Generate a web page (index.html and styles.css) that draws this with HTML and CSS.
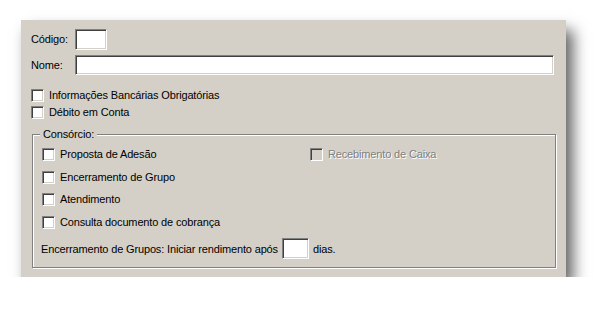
FILE: index.html
```html
<!DOCTYPE html>
<html lang="pt">
<head>
<meta charset="utf-8">
<link rel="stylesheet" href="styles.css">
</head>
<body>
<div class="panel">
  <div class="fields">
    <label class="lbl">Código:</label>
    <div class="inp inp-code"></div>
    <label class="lbl">Nome:</label>
    <div class="inp inp-name"></div>
  </div>
  <div class="checks">
    <div class="chk"><span class="box"></span><span>Informações Bancárias Obrigatórias</span></div>
    <div class="chk"><span class="box"></span><span>Débito em Conta</span></div>
  </div>
  <div class="group">
    <span class="legend">Consórcio:</span>
    <div class="group-grid">
      <div class="col">
        <div class="chk"><span class="box"></span><span>Proposta de Adesão</span></div>
        <div class="chk"><span class="box"></span><span>Encerramento de Grupo</span></div>
        <div class="chk"><span class="box"></span><span>Atendimento</span></div>
        <div class="chk"><span class="box"></span><span>Consulta documento de cobrança</span></div>
      </div>
      <div class="col">
        <div class="chk disabled"><span class="box"></span><span>Recebimento de Caixa</span></div>
      </div>
    </div>
    <div class="days">
      <span>Encerramento de Grupos: Iniciar rendimento após</span>
      <div class="inp inp-days"></div>
      <span>dias.</span>
    </div>
  </div>
</div>
</body>
</html>
```
FILE: styles.css
```css
html, body {
  margin: 0;
  padding: 0;
  background: #ffffff;
}
body {
  font-family: "Liberation Sans", Arial, sans-serif;
  font-size: 11px;
  letter-spacing: -0.15px;
  color: #000;
  padding: 20px 0 0 21px;
}
.panel {
  width: 545px;
  height: 257px;
  box-sizing: border-box;
  background: #d4d0c8;
  padding: 9px 12px 0 10px;
  box-shadow: 7px 10px 14px rgba(0, 0, 0, 0.62);
}
.fields {
  display: grid;
  grid-template-columns: 44px 1fr;
  row-gap: 5px;
  align-items: center;
}
.lbl {
  line-height: 13px;
}
.inp {
  box-sizing: border-box;
  background: #fff;
  border: 1px solid;
  border-color: #808080 #fff #fff #808080;
  box-shadow: inset 1px 1px #404040, inset -1px -1px #d4d0c8;
}
.inp-code {
  width: 32px;
  height: 21px;
}
.inp-name {
  height: 20px;
}
.checks {
  margin-top: 14px;
  display: flex;
  flex-direction: column;
  gap: 4px;
}
.chk {
  display: flex;
  align-items: center;
  gap: 5px;
  height: 13px;
  line-height: 13px;
  white-space: nowrap;
}
.box {
  flex: none;
  box-sizing: border-box;
  width: 13px;
  height: 13px;
  background: #fff;
  border: 1px solid;
  border-color: #808080 #fff #fff #808080;
  box-shadow: inset 1px 1px #404040, inset -1px -1px #d4d0c8;
}
.chk.disabled {
  color: #808080;
  text-shadow: 1px 1px #fff;
}
.chk.disabled .box {
  background: #d4d0c8;
}
.group {
  position: relative;
  margin: 15px -2px 0 1px;
  height: 134px;
  box-sizing: border-box;
  border: 1px solid #808080;
  box-shadow: inset 1px 1px #fff, 1px 1px #fff;
  padding: 13px 0 0 9px;
}
.legend {
  position: absolute;
  top: -7px;
  left: 7px;
  padding: 0 3px;
  line-height: 13px;
  background: #d4d0c8;
}
.group-grid {
  display: grid;
  grid-template-columns: 268px 1fr;
}
.col {
  display: flex;
  flex-direction: column;
  gap: 9.7px;
}
.days {
  margin: 9px 0 0 -1px;
  display: flex;
  align-items: center;
  gap: 4px;
  white-space: nowrap;
}
.inp-days {
  width: 27px;
  height: 21px;
}
```
